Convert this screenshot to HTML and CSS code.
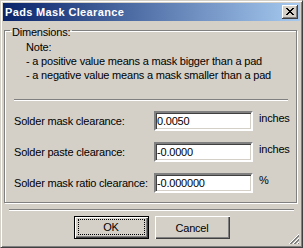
FILE: index.html
```html
<!DOCTYPE html>
<html lang="en">
<head>
    <meta charset="UTF-8">
    <title>Pads Mask Clearance</title>
    <link rel="stylesheet" href="styles.css">
</head>
<body>
    <div class="window">
        <div class="titlebar">
            <span class="title">Pads Mask Clearance</span>
            <button class="close-btn">
                <svg width="8" height="7" viewBox="0 0 8 7">
                    <path d="M0 0h2v1h-2zM6 0h2v1h-2zM1 1h2v1h-2zM5 1h2v1h-2zM2 2h4v1h-4zM3 3h2v1h-2zM2 4h4v1h-4zM1 5h2v1h-2zM5 5h2v1h-2zM0 6h2v1h-2zM6 6h2v1h-2z" fill="#000"/>
                </svg>
            </button>
        </div>

        <div class="client">
            <fieldset class="group">
                <legend>Dimensions:</legend>
                <div class="note">
                    Note:<br>
                    - a positive value means a mask bigger than a pad<br>
                    - a negative value means a mask smaller than a pad
                </div>
                <div class="etched group-sep"></div>
                <div class="fields">
                    <label for="mask">Solder mask clearance:</label>
                    <input id="mask" type="text" value="0.0050">
                    <span class="unit">inches</span>

                    <label for="paste">Solder paste clearance:</label>
                    <input id="paste" type="text" value="-0.0000">
                    <span class="unit">inches</span>

                    <label for="ratio">Solder mask ratio clearance:</label>
                    <input id="ratio" type="text" value="-0.000000">
                    <span class="unit">%</span>
                </div>
            </fieldset>

            <div class="etched bottom-sep"></div>

            <div class="buttons">
                <button class="btn btn-default"><span class="focus">OK</span></button>
                <button class="btn">Cancel</button>
            </div>

            <!-- size grip -->
            <svg class="grip" width="12" height="12" viewBox="0 0 12 12">
                <path d="M11 1L1 11M11 5L5 11M11 9L9 11" stroke="#fff" stroke-width="1"/>
                <path d="M11 2L2 11M11 3L3 11M11 6L6 11M11 7L7 11M11 10L10 11" stroke="#808080" stroke-width="1"/>
            </svg>
        </div>
    </div>
</body>
</html>
```

FILE: styles.css
```css
body {
    margin: 0;
    font-family: "Liberation Sans", Arial, sans-serif;
    font-size: 11px;
    letter-spacing: -0.2px;
    color: #000;
    background: #d4d0c8;
}
.window {
    position: relative;
    width: 303px;
    height: 248px;
    box-sizing: border-box;
    background: #d4d0c8;
    border: 1px solid;
    border-color: #d4d0c8 #404040 #404040 #d4d0c8;
    box-shadow: inset 1px 1px #fff, inset -1px -1px #808080;
    padding: 2px;
    display: flex;
    flex-direction: column;
}
.titlebar {
    height: 18px;
    display: flex;
    align-items: center;
    padding: 0 2px 0 2px;
    background: linear-gradient(to right, #0a246a, #a6caf0);
}
.title {
    flex: 1;
    color: #fff;
    font-weight: bold;
    font-size: 11px;
    letter-spacing: 0.35px;
    white-space: nowrap;
}
.close-btn {
    width: 16px;
    height: 14px;
    border: none;
    background: #d4d0c8;
    box-shadow: inset -1px -1px #404040, inset 1px 1px #fff, inset -2px -2px #808080;
    display: flex;
    align-items: center;
    justify-content: center;
    padding: 0 1px 1px 0;
}
.close-btn svg {
    display: block;
}
.client {
    flex: 1;
    display: flex;
    flex-direction: column;
}
.group {
    margin: 0 3px 0 1px;
    padding: 0 0 9px 0;
    border: 1px solid #808080;
    box-shadow: inset 1px 1px #fff, 1px 1px #fff;
    min-width: 0;
}
.group legend {
    margin-left: 5px;
    padding: 4px 2px 0 2px;
    line-height: 14px;
    background: #d4d0c8;
    background-clip: content-box;
}
.note {
    margin-top: 1px;
    padding-left: 21px;
    line-height: 14px;
    white-space: nowrap;
}
.etched {
    height: 0;
    border-top: 1px solid #808080;
    border-bottom: 1px solid #fff;
}
.group-sep {
    margin: 17px 8px 10px 9px;
}
.fields {
    display: grid;
    grid-template-columns: 140px 99px auto;
    grid-auto-rows: 20px;
    row-gap: 11px;
    padding-left: 9px;
    align-items: center;
}
.fields label {
    white-space: nowrap;
}
.fields input {
    box-sizing: border-box;
    width: 99px;
    height: 20px;
    margin: 0;
    padding: 0 0 0 1px;
    border: 2px solid;
    border-color: #808080 #fff #fff #808080;
    box-shadow: inset 1px 1px #404040, inset -1px -1px #d4d0c8;
    font-family: inherit;
    font-size: 11px;
    letter-spacing: -0.2px;
    color: #000;
    background: #fff;
    outline: none;
}
.unit {
    align-self: start;
    padding: 1px 0 0 6px;
}
.bottom-sep {
    margin: 6px 6px 0 6px;
}
.buttons {
    display: flex;
    justify-content: center;
    gap: 6px;
    margin-top: 5px;
}
.btn {
    box-sizing: border-box;
    width: 75px;
    height: 23px;
    margin: 0;
    padding: 0;
    border: none;
    background: #d4d0c8;
    box-shadow: inset 1px 1px #fff, inset -1px -1px #404040, inset -2px -2px #808080;
    font-family: inherit;
    font-size: 11px;
    letter-spacing: -0.2px;
    color: #000;
}
.btn-default {
    border: 1px solid #000;
    padding: 2px 3px 3px 3px;
    display: flex;
}
.focus {
    flex: 1;
    display: flex;
    align-items: center;
    justify-content: center;
    border: 1px dotted #000;
}
.grip {
    position: absolute;
    right: 2px;
    bottom: 2px;
}
```
